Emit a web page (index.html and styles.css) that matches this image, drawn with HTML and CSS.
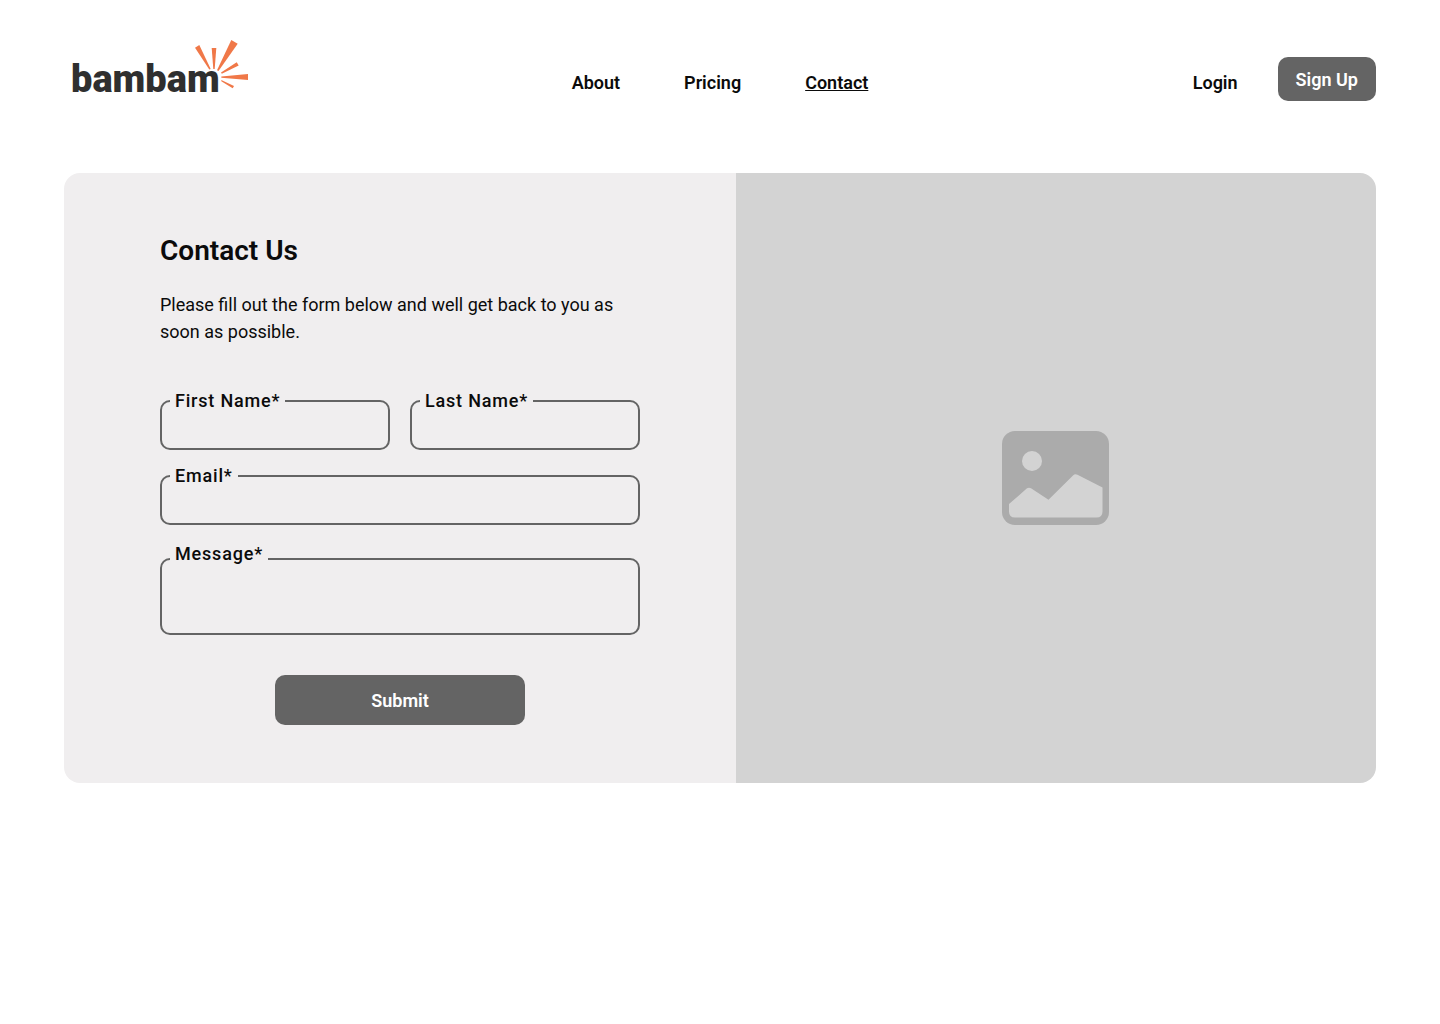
FILE: index.html
```html
<!DOCTYPE html>
<html lang="en">

<head>
    <meta charset="UTF-8" />
    <meta name="viewport" content="width=device-width, initial-scale=1.0" />
    <title>Contact | bambam</title>
    <link rel="stylesheet" href="styles.css">
</head>

<body>
    <header class="header">
        <a class="logo" href="#">
            <svg width="184" height="64" viewBox="0 0 184 64" role="img" aria-label="bambam">
                <text class="logo-text" x="7" y="52">bambam</text>
                <g class="logo-rays">
                    <path d="M131 7.7 135.3 5 146.7 28.9 145.3 29.6Z" />
                    <path d="M147.7 8H152.3L150.7 29H149.3Z" />
                    <path d="M167.3 0 173.7 3.7 154.5 31 153 30.2Z" />
                    <path d="M172.7 22.3 174.7 25.5 157.8 33.7 157 32.6Z" />
                    <path d="M184 34V40L157.3 37.8V36.4Z" />
                    <path d="M157.3 40 170 46 168.7 48.2 157.3 41.2Z" />
                </g>
            </svg>
        </a>
        <nav class="nav">
            <a href="#">About</a>
            <a href="#">Pricing</a>
            <a class="active" href="#">Contact</a>
        </nav>
        <div class="account">
            <a class="login" href="#">Login</a>
            <button class="btn signup" type="button">Sign Up</button>
        </div>
    </header>

    <main class="card">
        <section class="contact">
            <h1>Contact Us</h1>
            <p>Please fill out the form below and well get back to you as soon as possible.</p>
            <form class="form">
                <div class="field">
                    <label for="firstName">First Name*</label>
                    <input type="text" id="firstName" required>
                </div>
                <div class="field">
                    <label for="lastName">Last Name*</label>
                    <input type="text" id="lastName" required>
                </div>
                <div class="field wide">
                    <label for="email">Email*</label>
                    <input type="email" id="email" required>
                </div>
                <div class="field wide message">
                    <label for="message">Message*</label>
                    <textarea id="message" required></textarea>
                </div>
                <button class="btn submit" type="submit">Submit</button>
            </form>
        </section>
        <div class="picture">
            <svg width="108" height="94" viewBox="0 0 108 94" aria-hidden="true">
                <rect class="frame" width="107" height="94" rx="13" />
                <circle class="cutout" cx="30" cy="30" r="10" />
                <path class="cutout" d="M7 73 25 57.3Q27 56 29 57.3L46.5 68.8 71 44.4Q73 42.5 75.5 43.8L100.5 56.5V80.5Q100.5 86.5 94.5 86.5H13Q7 86.5 7 80.5Z" />
            </svg>
        </div>
    </main>
</body>

</html>
```

FILE: styles.css
```css
:root {
    --text: #0b0b0b;
    --gray: #646464;
    --panel: #f0eeef;
    --picture: #d3d3d3;
    --icon: #ababab;
    --orange: #f07848;
}

* {
    margin: 0;
    padding: 0;
    box-sizing: border-box;
    font-family: Roboto, sans-serif;
}

body {
    background-color: #fff;
    color: var(--text);
    font-size: 18px;
    padding: 40px 64px;
}

a {
    color: inherit;
    text-decoration: none;
}

.header {
    display: grid;
    grid-template-columns: 1fr auto 1fr;
    align-items: end;
    margin-bottom: 72px;
}

.logo {
    height: 61px;
}

.logo svg,
.picture svg {
    display: block;
}

.logo-text {
    font-size: 38px;
    font-weight: 900;
    fill: #2f2f2f;
}

.logo-rays {
    fill: var(--orange);
}

.nav {
    display: flex;
    gap: 64px;
    line-height: 36px;
    font-weight: 600;
}

.nav .active {
    text-decoration: underline;
    text-decoration-thickness: 1px;
}

.account {
    display: flex;
    justify-content: flex-end;
    align-items: flex-end;
    gap: 40px;
}

.login {
    line-height: 36px;
    font-weight: 600;
}

.btn {
    background: var(--gray);
    color: #fff;
    border: none;
    border-radius: 10px;
    font-size: 18px;
    font-weight: 600;
    cursor: pointer;
}

.signup {
    height: 44px;
    padding: 0 18px;
}

.card {
    display: grid;
    grid-template-columns: 21fr 20fr;
    border-radius: 16px;
    overflow: hidden;
}

.contact {
    background: var(--panel);
    padding: 56px 96px 58px;
}

h1 {
    font-size: 28px;
    line-height: 44px;
    font-weight: 600;
    margin-bottom: 18px;
}

.contact p {
    line-height: 27px;
    margin-bottom: 42px;
}

.form {
    display: grid;
    grid-template-columns: 1fr 1fr;
    gap: 12px 20px;
}

/* label sits over the top border of its box */
.field {
    position: relative;
    padding-top: 13px;
}

.field label {
    position: absolute;
    top: 0;
    left: 10px;
    padding: 0 5px;
    background: var(--panel);
    line-height: 27px;
    font-weight: 500;
    letter-spacing: 0.045em;
}

.field input,
.field textarea {
    display: block;
    width: 100%;
    height: 50px;
    padding: 8px 16px;
    background: transparent;
    border: 2px solid var(--gray);
    border-radius: 10px;
    font-size: 18px;
    color: var(--text);
    resize: none;
}

.wide {
    grid-column: 1 / -1;
}

.message {
    margin-top: 3px;
    padding-top: 18px;
}

.field textarea {
    height: 77px;
}

.submit {
    grid-column: 1 / -1;
    justify-self: center;
    width: 250px;
    height: 50px;
    margin-top: 28px;
}

.picture {
    display: flex;
    justify-content: center;
    align-items: center;
    background: var(--picture);
}

.frame {
    fill: var(--icon);
}

.cutout {
    fill: var(--picture);
}

@media (max-width: 1000px) {
    body {
        padding: 24px;
    }

    .header {
        grid-template-columns: 1fr;
        justify-items: center;
        gap: 16px;
        margin-bottom: 32px;
    }

    .card {
        grid-template-columns: 1fr;
    }

    .contact {
        padding: 32px 24px;
    }

    .picture {
        min-height: 320px;
    }
}
```
